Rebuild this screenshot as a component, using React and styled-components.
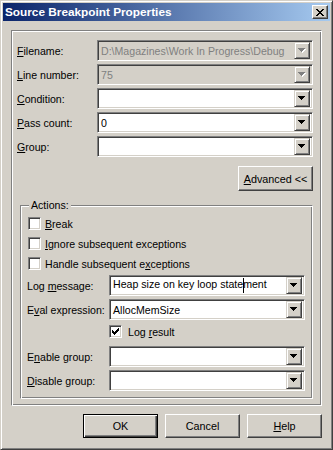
import React from "react";
import styled, { createGlobalStyle } from "styled-components";

const GlobalStyle = createGlobalStyle`
  html, body {
    margin: 0;
    padding: 0;
    background: #d4d0c8;
  }
  body {
    font-family: "Liberation Sans", Arial, sans-serif;
    font-size: 10.6px;
    color: #000;
  }
`;

const Window = styled.div`
  width: 333px;
  height: 450px;
  box-sizing: border-box;
  background: #d4d0c8;
  border: 1px solid;
  border-color: #d4d0c8 #404040 #404040 #d4d0c8;
  box-shadow: inset 1px 1px #fff, inset -1px -1px #808080;
  padding: 2px;
  display: flex;
  flex-direction: column;
`;

const TitleBar = styled.div`
  height: 18px;
  flex: none;
  display: flex;
  align-items: center;
  padding-left: 2px;
  background: linear-gradient(to right, #0a246a, #a6caf0);
  color: #fff;
  font-weight: bold;
  font-size: 11.8px;
`;

const TitleText = styled.span`
  flex: 1;
`;

const CloseButton = styled.div`
  width: 16px;
  height: 14px;
  margin-right: 2px;
  box-sizing: border-box;
  background: #d4d0c8;
  border: 1px solid;
  border-color: #fff #404040 #404040 #fff;
  box-shadow: inset -1px -1px #808080;
  display: flex;
  align-items: center;
  justify-content: center;
`;

const Body = styled.div`
  flex: 1;
  display: flex;
  flex-direction: column;
  padding: 9px 8px 0 8px;
`;

const Frame = styled.div`
  border: 1px solid;
  border-color: #808080 #fff #fff #808080;
  box-shadow: inset 1px 1px #fff, inset -1px -1px #808080;
  padding: 9px 8px 6px 5px;
  display: flex;
  flex-direction: column;
`;

const Fields = styled.div`
  display: flex;
  flex-direction: column;
  gap: 3px;
`;

const FieldRow = styled.div`
  display: flex;
  align-items: center;
  height: 21px;
`;

const Label = styled.span`
  width: ${(p) => p.$w}px;
  flex: none;
  white-space: nowrap;
`;

const U = styled.span`
  text-decoration: underline;
  text-underline-offset: 1px;
`;

const Combo = styled.div`
  flex: 1;
  height: 21px;
  box-sizing: border-box;
  display: flex;
  align-items: center;
  background: ${(p) => (p.$disabled ? "#d4d0c8" : "#fff")};
  color: ${(p) => (p.$disabled ? "#808080" : "#000")};
  border: 1px solid;
  border-color: #808080 #fff #fff #808080;
  box-shadow: inset 1px 1px #404040, inset -1px -1px #d4d0c8;
  padding: 2px;
`;

const ComboText = styled.span`
  flex: 1;
  padding-left: 1px;
  white-space: nowrap;
  overflow: hidden;
`;

const DropButton = styled.div`
  width: 16px;
  height: 17px;
  flex: none;
  box-sizing: border-box;
  background: #d4d0c8;
  border: 1px solid;
  border-color: #d4d0c8 #404040 #404040 #d4d0c8;
  box-shadow: inset 1px 1px #fff, inset -1px -1px #808080;
  display: flex;
  align-items: center;
  justify-content: center;
`;

const Caret = styled.span`
  display: inline-block;
  width: 1px;
  height: 15px;
  background: #000;
  vertical-align: middle;
  margin-right: -1px;
`;

const Button = styled.button`
  width: 75px;
  height: ${(p) => p.$h || 24}px;
  box-sizing: border-box;
  font-family: inherit;
  font-size: 10.8px;
  color: #000;
  padding: 0;
  background: #d4d0c8;
  border: 1px solid;
  border-color: ${(p) => (p.$default ? "#000" : "#fff #404040 #404040 #fff")};
  box-shadow: ${(p) =>
    p.$default
      ? "inset 1px 1px #fff, inset -1px -1px #404040, inset -2px -2px #808080"
      : "inset -1px -1px #808080"};
  cursor: default;
`;

const AdvancedButton = styled(Button)`
  align-self: flex-end;
  margin-top: 9px;
`;

const GroupBox = styled.div`
  margin: 14px 0 0 3px;
  border: 1px solid;
  border-color: #808080 #fff #fff #808080;
  box-shadow: inset 1px 1px #fff, inset -1px -1px #808080;
  padding: 0 7px 7px 6px;
  display: flex;
  flex-direction: column;
`;

const Legend = styled.span`
  align-self: flex-start;
  margin: -7px 0 0 2px;
  padding: 0 2px;
  line-height: 13px;
  background: #d4d0c8;
`;

const CheckList = styled.div`
  display: flex;
  flex-direction: column;
  gap: 7px;
  margin-top: 5px;
`;

const CheckRow = styled.div`
  display: flex;
  align-items: center;
  height: 13px;
  gap: ${(p) => p.$gap || 4}px;
  padding-left: ${(p) => p.$indent || 1}px;
  margin-top: ${(p) => p.$top || 0}px;
`;

const Box = styled.div`
  width: 13px;
  height: 13px;
  box-sizing: border-box;
  flex: none;
  background: #fff;
  border: 1px solid;
  border-color: #808080 #fff #fff #808080;
  box-shadow: inset 1px 1px #404040, inset -1px -1px #d4d0c8;
  display: flex;
  align-items: center;
  justify-content: center;
`;

const GroupFields = styled(Fields)`
  margin-top: ${(p) => p.$top || 0}px;
`;

const ButtonRow = styled.div`
  display: flex;
  justify-content: flex-end;
  gap: 7px;
  margin-top: 8px;
`;

function Arrow({ disabled }) {
  const d = "M0 0h7v1h-1v1h-1v1h-1v1h-1v-1h-1v-1h-1v-1h-1z";
  return (
    <svg width="8" height="5" viewBox="0 0 8 5" shapeRendering="crispEdges">
      {disabled && <path d={d} fill="#fff" transform="translate(1 1)" />}
      <path d={d} fill={disabled ? "#808080" : "#000"} />
    </svg>
  );
}

function CheckMark() {
  const cells = [
    [6, 0],
    [5, 1], [6, 1],
    [0, 2], [4, 2], [5, 2], [6, 2],
    [0, 3], [1, 3], [3, 3], [4, 3], [5, 3],
    [0, 4], [1, 4], [2, 4], [3, 4], [4, 4],
    [1, 5], [2, 5], [3, 5],
    [2, 6],
  ];
  return (
    <svg width="7" height="7" viewBox="0 0 7 7" shapeRendering="crispEdges">
      {cells.map(([x, y]) => (
        <rect key={`${x}-${y}`} x={x} y={y} width="1" height="1" fill="#000" />
      ))}
    </svg>
  );
}

function CloseGlyph() {
  return (
    <svg width="8" height="7" viewBox="0 0 8 7" shapeRendering="crispEdges">
      <path
        d="M0 0h2v1h1v1h2v-1h1v-1h2v1h-1v1h-1v1h-1v1h1v1h1v1h1v1h-2v-1h-1v-1h-2v1h-1v1h-2v-1h1v-1h1v-1h1v-1h-1v-1h-1v-1h-1z"
        fill="#000"
      />
    </svg>
  );
}

function ComboBox({ value, disabled, children }) {
  return (
    <Combo $disabled={disabled}>
      <ComboText>{children || value}</ComboText>
      <DropButton>
        <Arrow disabled={disabled} />
      </DropButton>
    </Combo>
  );
}

function Field({ label, width, ...rest }) {
  return (
    <FieldRow>
      <Label $w={width}>{label}</Label>
      <ComboBox {...rest} />
    </FieldRow>
  );
}

function Check({ checked, children, ...rest }) {
  return (
    <CheckRow {...rest}>
      <Box>{checked && <CheckMark />}</Box>
      <span>{children}</span>
    </CheckRow>
  );
}

export default function App() {
  return (
    <>
      <GlobalStyle />
      <Window>
        <TitleBar>
          <TitleText>Source Breakpoint Properties</TitleText>
          <CloseButton>
            <CloseGlyph />
          </CloseButton>
        </TitleBar>
        <Body>
          <Frame>
            <Fields>
              <Field
                width={80}
                disabled
                label={<><U>F</U>ilename:</>}
                value="D:\Magazines\Work In Progress\Debug"
              />
              <Field width={80} disabled label={<><U>L</U>ine number:</>} value="75" />
              <Field width={80} label={<><U>C</U>ondition:</>} value="" />
              <Field width={80} label={<><U>P</U>ass count:</>} value="0" />
              <Field width={80} label={<><U>G</U>roup:</>} value="" />
            </Fields>
            <AdvancedButton $h={25}>
              <U>A</U>dvanced &lt;&lt;
            </AdvancedButton>
            <GroupBox>
              <Legend>Actions:</Legend>
              <CheckList>
                <Check><U>B</U>reak</Check>
                <Check><U>I</U>gnore subsequent exceptions</Check>
                <Check>Handle subsequent e<U>x</U>ceptions</Check>
              </CheckList>
              <GroupFields $top={5}>
                <Field width={82} label={<>Log <U>m</U>essage:</>}>
                  Heap size on key loop state<Caret />ment
                </Field>
                <Field width={82} label={<>E<U>v</U>al expression:</>} value="AllocMemSize" />
              </GroupFields>
              <CheckRow $indent={82} $gap={6} $top={5}>
                <Box>
                  <CheckMark />
                </Box>
                <span>
                  Log <U>r</U>esult
                </span>
              </CheckRow>
              <GroupFields $top={8}>
                <Field width={82} label={<>E<U>n</U>able group:</>} value="" />
                <Field width={82} label={<><U>D</U>isable group:</>} value="" />
              </GroupFields>
            </GroupBox>
          </Frame>
          <ButtonRow>
            <Button $default>OK</Button>
            <Button>Cancel</Button>
            <Button>
              <U>H</U>elp
            </Button>
          </ButtonRow>
        </Body>
      </Window>
    </>
  );
}
